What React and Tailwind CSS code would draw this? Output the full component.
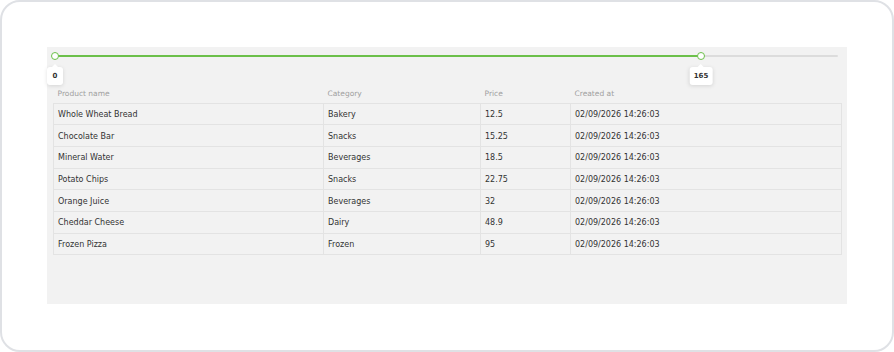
import React from 'react';

const rows = [
  ['Whole Wheat Bread', 'Bakery', '12.5'],
  ['Chocolate Bar', 'Snacks', '15.25'],
  ['Mineral Water', 'Beverages', '18.5'],
  ['Potato Chips', 'Snacks', '22.75'],
  ['Orange Juice', 'Beverages', '32'],
  ['Cheddar Cheese', 'Dairy', '48.9'],
  ['Frozen Pizza', 'Frozen', '95'],
];

const MAX = 200;
const value = 165;

function Tip({ left, children }) {
  return (
    <div className="absolute top-[20px] -translate-x-1/2" style={{ left }}>
      <div className="relative flex h-[18px] min-w-[16px] items-center justify-center rounded-[3px] bg-white px-[4px] text-[7px] font-semibold text-[#333] shadow-[0_1px_4px_rgba(0,0,0,0.12)]">
        <span className="absolute -top-[2px] left-1/2 h-[5px] w-[5px] -translate-x-1/2 rotate-45 bg-white" />
        <span className="relative">{children}</span>
      </div>
    </div>
  );
}

export default function App() {
  const pct = value / MAX;
  return (
    <div
      className="h-[352px] w-[894px] rounded-[20px] border-2 border-[#dfe1e5] bg-white pl-[45px] pt-[45px]"
      style={{ fontFamily: '"DejaVu Sans", "Noto Sans", sans-serif' }}
    >
      <div className="flex h-[257px] w-[800px] flex-col bg-[#f2f2f2]">
        {/* range slider */}
        <div className="relative h-[40px] w-full">
          <div className="absolute left-[8px] top-[8px] h-[2px] w-[783px] rounded bg-[#dcdcdc]">
            <div className="h-full bg-[#6cc04a]" style={{ width: `${pct * 100}%` }} />
          </div>
          <div className="absolute left-[4px] top-[5px] h-[8px] w-[8px] rounded-full border-[1.5px] border-[#6cc04a] bg-white" />
          <div
            className="absolute top-[5px] h-[8px] w-[8px] -translate-x-1/2 rounded-full border-[1.5px] border-[#6cc04a] bg-white"
            style={{ left: 8 + pct * 783 }}
          />
          <Tip left={8}>0</Tip>
          <Tip left={8 + pct * 783}>165</Tip>
        </div>

        {/* table */}
        <table className="ml-[6px] w-[788px] table-fixed border-collapse text-left text-[8px]">
          <colgroup>
            <col className="w-[270px]" />
            <col className="w-[157px]" />
            <col className="w-[90px]" />
            <col className="w-[271px]" />
          </colgroup>
          <thead>
            <tr className="h-[16px] text-[7.5px] text-[#a0a0a0]">
              <th className="px-[4px] pb-[2px] font-normal">Product name</th>
              <th className="px-[4px] pb-[2px] font-normal">Category</th>
              <th className="px-[4px] pb-[2px] font-normal">Price</th>
              <th className="px-[4px] pb-[2px] font-normal">Created at</th>
            </tr>
          </thead>
          <tbody className="text-[#333]">
            {rows.map(([name, cat, price]) => (
              <tr key={name} className="h-[21.7px]">
                <td className="border border-[#e3e3e3] px-[4px] pt-[2px]">{name}</td>
                <td className="border border-[#e3e3e3] px-[4px] pt-[2px]">{cat}</td>
                <td className="border border-[#e3e3e3] px-[4px] pt-[2px]">{price}</td>
                <td className="border border-[#e3e3e3] px-[4px] pt-[2px]">02/09/2026 14:26:03</td>
              </tr>
            ))}
          </tbody>
        </table>
      </div>
    </div>
  );
}
